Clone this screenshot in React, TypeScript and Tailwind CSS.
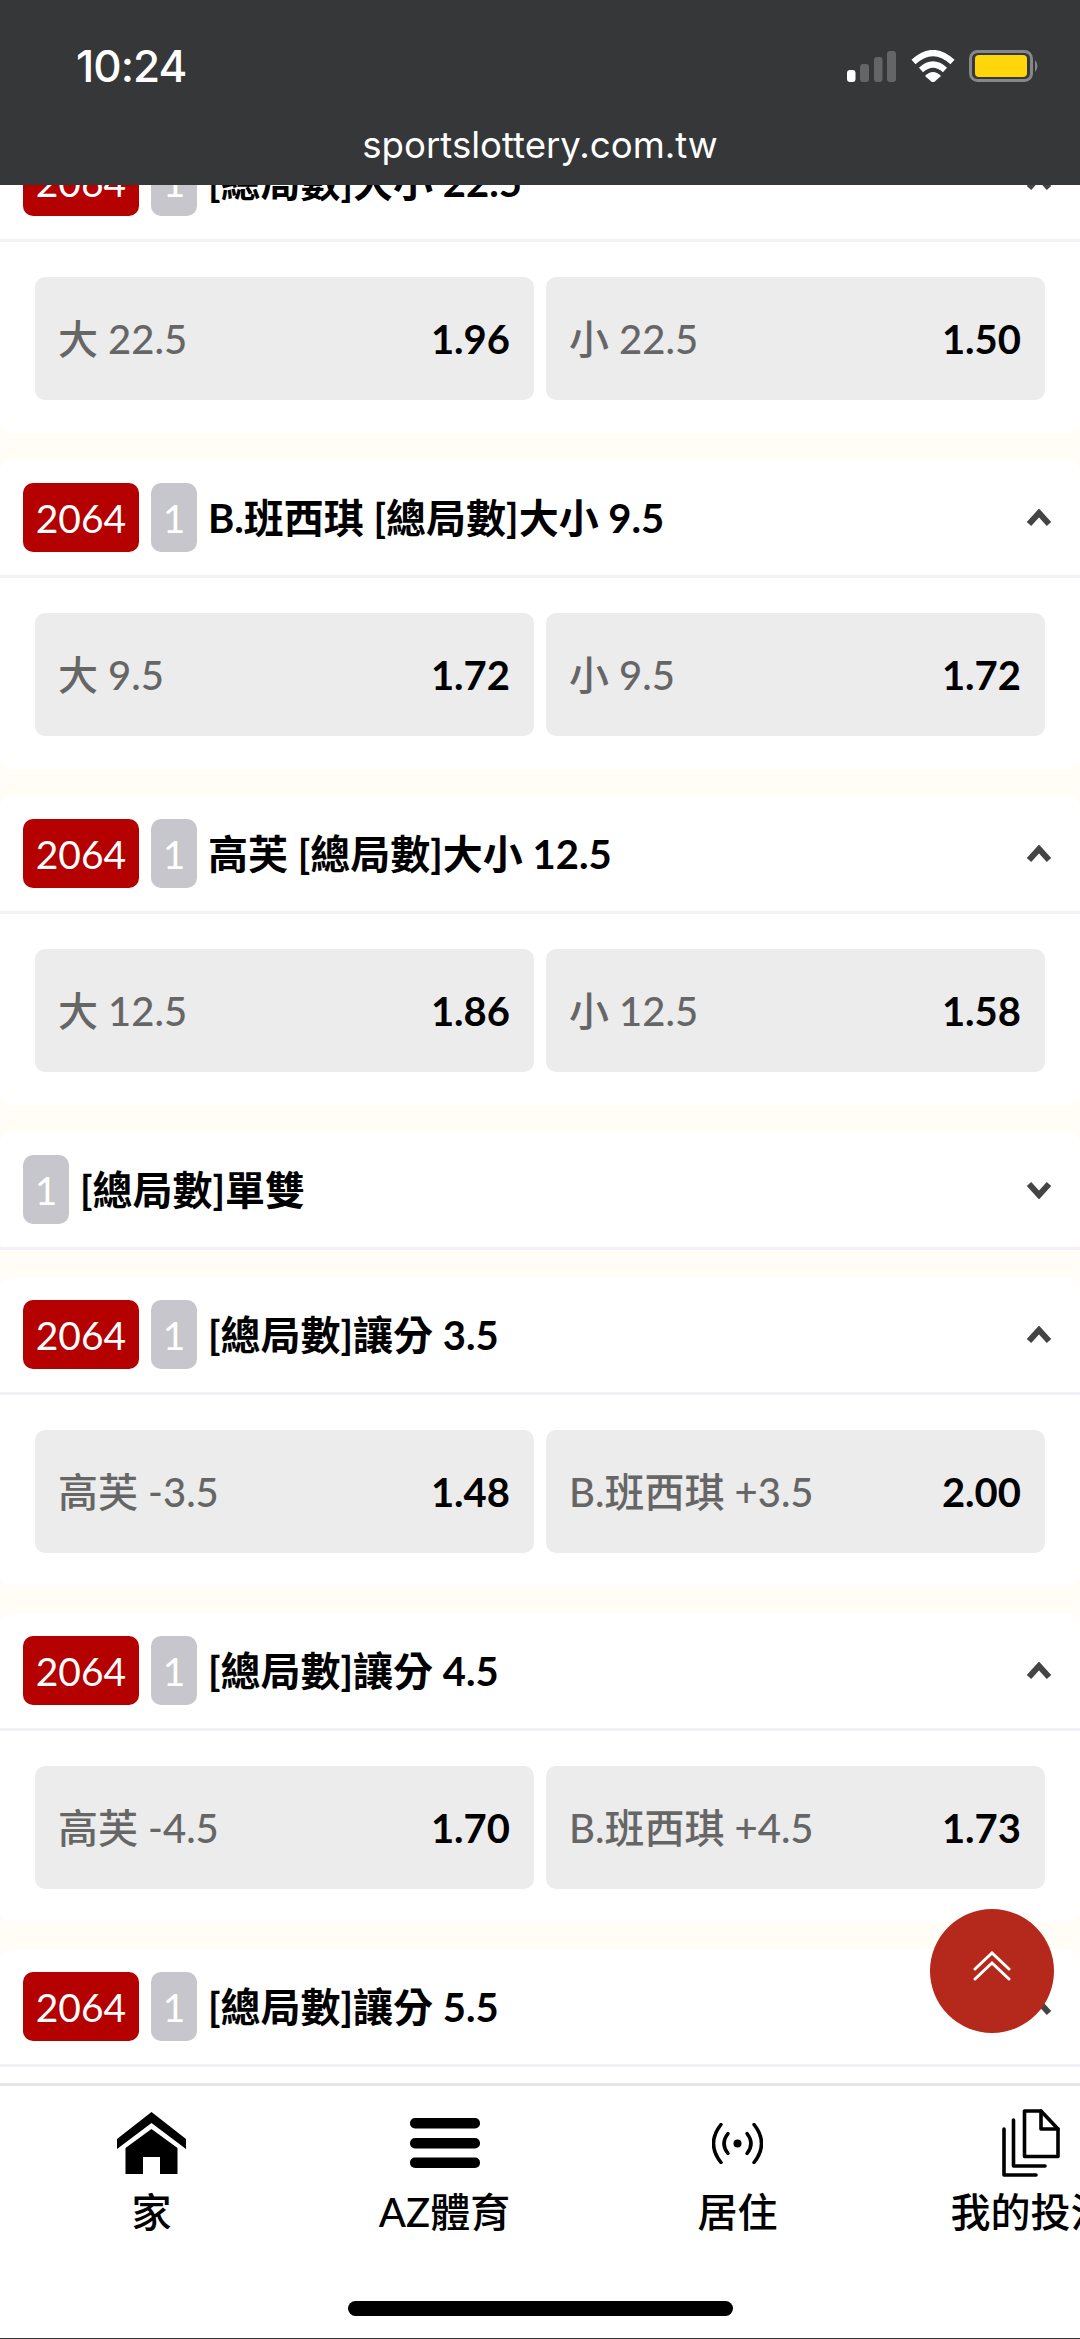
const CJK = "font-['Lato','Noto_Sans_CJK_TC',sans-serif]";

type Market = {
  title: string;
  live?: boolean;
  open: boolean;
  odds?: [string, string, string, string];
};

const markets: Market[] = [
  { title: "[總局數]大小 22.5", live: true, open: true, odds: ["大 22.5", "1.96", "小 22.5", "1.50"] },
  { title: "B.班西琪 [總局數]大小 9.5", live: true, open: true, odds: ["大 9.5", "1.72", "小 9.5", "1.72"] },
  { title: "高芙 [總局數]大小 12.5", live: true, open: true, odds: ["大 12.5", "1.86", "小 12.5", "1.58"] },
  { title: "[總局數]單雙", open: false },
  { title: "[總局數]讓分 3.5", live: true, open: true, odds: ["高芙 -3.5", "1.48", "B.班西琪 +3.5", "2.00"] },
  { title: "[總局數]讓分 4.5", live: true, open: true, odds: ["高芙 -4.5", "1.70", "B.班西琪 +4.5", "1.73"] },
  { title: "[總局數]讓分 5.5", live: true, open: true },
];

function Chevron({ up }: { up: boolean }) {
  return (
    <svg width="26" height="18" viewBox="0 0 26 18" className="shrink-0 text-[#444]">
      <path
        d={up ? "M3 15 L13 4 L23 15" : "M3 3 L13 14 L23 3"}
        fill="none"
        stroke="currentColor"
        strokeWidth="6"
      />
    </svg>
  );
}

function OddsButton({ label, price }: { label: string; price: string }) {
  return (
    <div className="flex h-[123px] items-center justify-between rounded-[10px] bg-[#ececec] pl-[23px] pr-6">
      <span className="text-[40px] font-medium text-[#666]">{label}</span>
      <span className="text-[40px] font-bold text-black">{price}</span>
    </div>
  );
}

function MarketCard({ market }: { market: Market }) {
  return (
    <section className="rounded-[12px] bg-white">
      <header className="flex h-[118px] items-center border-b-[3px] border-[#f2f1f7] pl-[23px] pr-[28px]">
        {market.live && (
          <span className="mr-3 flex h-[69px] w-[116px] items-center justify-center rounded-[10px] bg-[#b50000] text-white">
            2064
          </span>
        )}
        <span className="mr-[11px] flex h-[69px] w-[46px] items-center justify-center rounded-[10px] bg-[#c6c6cc] text-white">
          1
        </span>
        <span className="flex-1 text-[40px] font-bold text-black">{market.title}</span>
        <Chevron up={market.open} />
      </header>
      {market.open && (
        <div className="h-[191px] px-[35px] pt-[35px]">
          {market.odds && (
            <div className="grid grid-cols-2 gap-3">
              <OddsButton label={market.odds[0]} price={market.odds[1]} />
              <OddsButton label={market.odds[2]} price={market.odds[3]} />
            </div>
          )}
        </div>
      )}
    </section>
  );
}

function StatusIcons() {
  return (
    <svg width="193" height="32" viewBox="0 0 193 32" className="block">
      <rect x="0" y="20" width="8.5" height="12" rx="3" fill="#fff" />
      <rect x="13" y="14" width="9" height="18" rx="3" fill="#636567" />
      <rect x="27" y="7" width="8.5" height="25" rx="3" fill="#636567" />
      <rect x="40" y="1" width="9" height="31" rx="3" fill="#636567" />
      <path d="M66.5 12 Q86 -6 105.5 12" fill="none" stroke="#fff" strokeWidth="6" />
      <path d="M74 20 Q86 9 98 20" fill="none" stroke="#fff" strokeWidth="6" />
      <path d="M78 26 Q86 18 94 26 L86 33 Z" fill="#fff" />
      <rect x="123.5" y="1.5" width="61" height="29" rx="7" fill="none" stroke="#85878a" strokeWidth="3" />
      <rect x="128" y="5" width="52" height="22" rx="4" fill="#ffd60a" />
      <path d="M188 10 Q193 16 188 22 Z" fill="#85878a" />
    </svg>
  );
}

function HomeIcon() {
  return (
    <svg width="69" height="62" viewBox="0 0 69 62" className="block">
      <path d="M34.5 0 L69 27 V37 L34.5 11 L0 37 V27 Z" fill="#000" />
      <path d="M34.5 17 L60.5 36 V62 H43 V45 H26 V62 H8.5 V36 Z" fill="#000" />
    </svg>
  );
}

function MenuIcon() {
  return (
    <svg width="70" height="50" viewBox="0 0 70 50" className="block">
      <rect x="0" y="0" width="70" height="10.5" rx="5" fill="#000" />
      <rect x="0" y="20" width="70" height="10.5" rx="5" fill="#000" />
      <rect x="0" y="39.5" width="70" height="10.5" rx="5" fill="#000" />
    </svg>
  );
}

function LiveIcon() {
  return (
    <svg width="51" height="41" viewBox="0 0 51 41" fill="none" stroke="#000" strokeWidth="3.5" strokeLinecap="round" className="block">
      <circle cx="25.5" cy="20.5" r="4" fill="#000" stroke="none" />
      <path d="M16 10.5 Q8 20.5 16 30.5" />
      <path d="M35 10.5 Q43 20.5 35 30.5" />
      <path d="M9 1.5 Q-6 20.5 9 39.5" />
      <path d="M42 1.5 Q57 20.5 42 39.5" />
    </svg>
  );
}

function BetsIcon() {
  return (
    <svg width="58" height="68" viewBox="0 0 58 68" fill="none" stroke="#000" strokeWidth="3.6" strokeLinecap="round" strokeLinejoin="round" className="block">
      <path d="M22.5 2 H39 L56 20 V47.5 H22.5 Z" />
      <path d="M39 2 V20 H56" />
      <path d="M11.5 11 V57 H43" />
      <path d="M2 20 V66 H34" />
    </svg>
  );
}

const tabs = [
  { label: "家", icon: <HomeIcon /> },
  { label: "AZ體育", icon: <MenuIcon /> },
  { label: "居住", icon: <LiveIcon /> },
  { label: "我的投注", icon: <BetsIcon /> },
];

export default function App() {
  return (
    <div className={`relative flex h-[2339px] w-[1080px] flex-col overflow-hidden bg-white ${CJK}`}>
      <div className="relative z-10 h-[185px] shrink-0 bg-[#353739] text-white">
        <div className="flex items-center justify-between pl-[76px] pr-[40px] pt-[42px]">
          <span className="font-['Inter',sans-serif] text-[44px] leading-[48px] font-medium tracking-[-1px]">10:24</span>
          <StatusIcons />
        </div>
        <div className="mt-[33px] text-center font-['Inter',sans-serif] text-[36.6px] leading-[44px] font-normal">
          sportslottery.com.tw
        </div>
      </div>

      <main className="-mt-[61px] flex min-h-0 flex-1 flex-col gap-[27px] overflow-hidden bg-[#fffdf6] text-[39px] leading-[50px]">
        {markets.map((m) => (
          <MarketCard key={m.title} market={m} />
        ))}
      </main>

      <nav className="flex h-[256px] shrink-0 overflow-hidden border-t-[3px] border-[#e6e6e6] bg-white pl-[5px] pt-[21px]">
        {tabs.map((t) => (
          <div key={t.label} className="flex w-[293px] shrink-0 flex-col items-center">
            <div className="flex h-[72px] items-center justify-center">{t.icon}</div>
            <span className="mt-[10px] whitespace-nowrap text-[40px] leading-[46px] font-medium text-black">{t.label}</span>
          </div>
        ))}
      </nav>

      {/* home indicator and bottom edge */}
      <div className="absolute bottom-[23px] left-[348px] h-[15px] w-[385px] rounded-full bg-black" />
      <div className="absolute inset-x-0 bottom-0 h-px bg-[#333]" />

      {/* back-to-top button */}
      <button className="absolute bottom-[306px] right-[26px] flex h-[124px] w-[124px] items-center justify-center rounded-full bg-[#b5281c]">
        <svg width="38" height="30" viewBox="0 0 38 30" fill="none" stroke="#fff" strokeWidth="3" strokeLinecap="round" className="mb-[11px]">
          <path d="M2 18 L19 2 L36 18" />
          <path d="M2 28 L19 12 L36 28" />
        </svg>
      </button>
    </div>
  );
}
